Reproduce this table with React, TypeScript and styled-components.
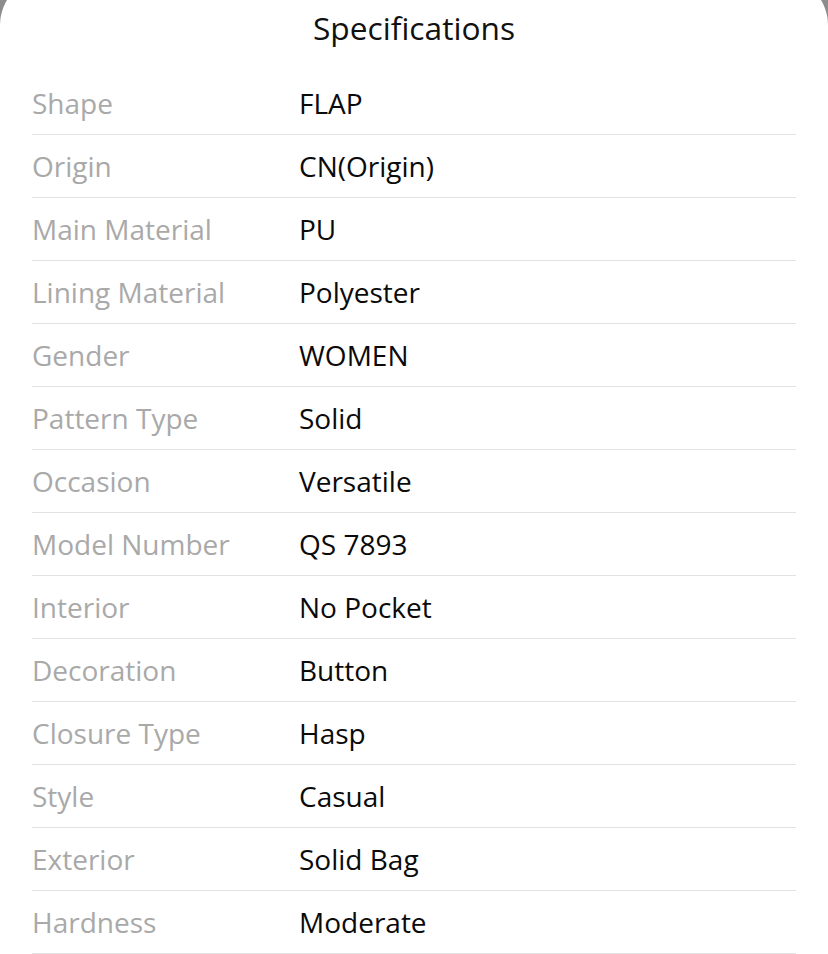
import React from "react";
import styled, { createGlobalStyle } from "styled-components";

const GlobalStyle = createGlobalStyle`
  html, body {
    margin: 0;
    padding: 0;
    background: #8c8c8c;
  }
  body {
    font-family: "Open Sans", "Noto Sans", sans-serif;
    overflow: hidden;
  }
`;

const Sheet = styled.div`
  margin-top: -23px;
  padding-top: 23px;
  background: #ffffff;
  border-radius: 48px 48px 0 0;
  min-height: 1000px;
`;

const Header = styled.header`
  height: 54px;
  margin-bottom: 18px;
  display: flex;
  align-items: center;
  justify-content: center;
`;

const Title = styled.h1`
  margin: 0;
  font-size: 31.7px;
  font-weight: 400;
  color: #111111;
  letter-spacing: 0;
`;

const List = styled.dl`
  margin: 0 32px;
  padding: 0;
`;

const Row = styled.div`
  display: grid;
  grid-template-columns: 267px 1fr;
  align-items: center;
  height: 62px;
  border-bottom: 1px solid #e2e2e2;
`;

const Label = styled.dt`
  margin: 0;
  font-size: 28px;
  color: #a9a9a9;
  white-space: nowrap;
`;

const Value = styled.dd`
  margin: 0;
  font-size: 28px;
  color: #0a0a0a;
  white-space: nowrap;
`;

const specs: [string, string][] = [
  ["Shape", "FLAP"],
  ["Origin", "CN(Origin)"],
  ["Main Material", "PU"],
  ["Lining Material", "Polyester"],
  ["Gender", "WOMEN"],
  ["Pattern Type", "Solid"],
  ["Occasion", "Versatile"],
  ["Model Number", "QS 7893"],
  ["Interior", "No Pocket"],
  ["Decoration", "Button"],
  ["Closure Type", "Hasp"],
  ["Style", "Casual"],
  ["Exterior", "Solid Bag"],
  ["Hardness", "Moderate"],
];

export default function App() {
  return (
    <>
      <GlobalStyle />
      <Sheet>
        <Header>
          <Title>Specifications</Title>
        </Header>
        <List>
          {specs.map(([k, v]) => (
            <Row key={k}>
              <Label>{k}</Label>
              <Value>{v}</Value>
            </Row>
          ))}
        </List>
      </Sheet>
    </>
  );
}
